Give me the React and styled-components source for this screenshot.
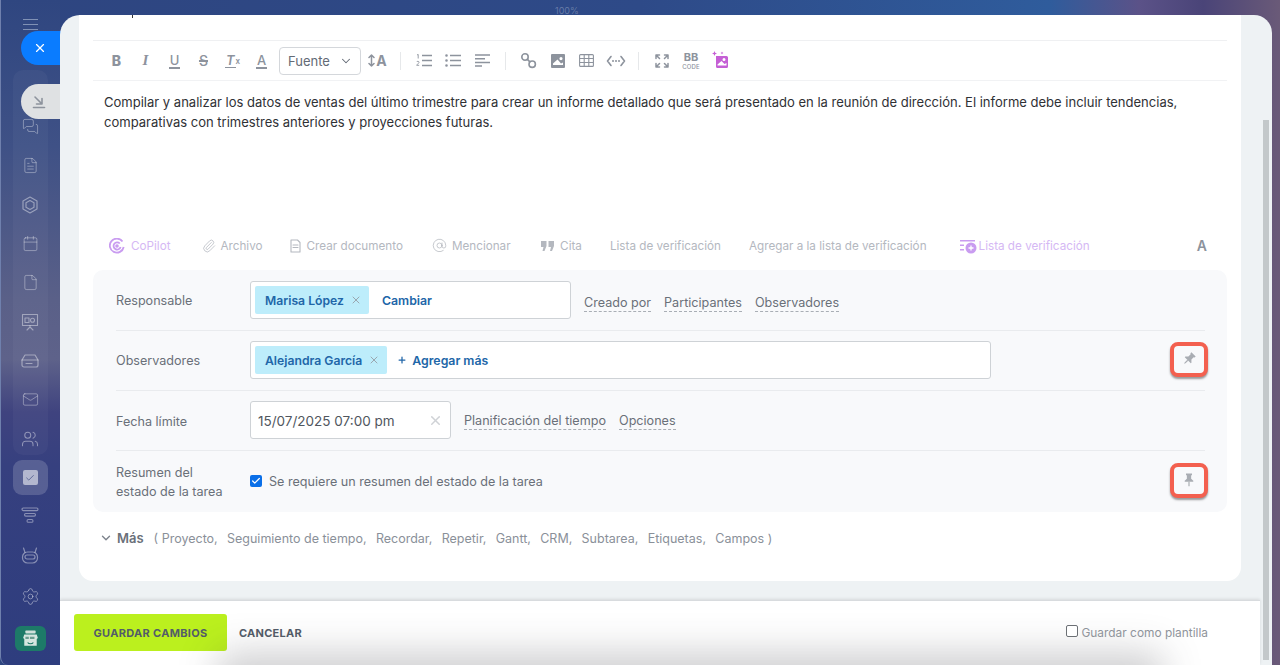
import React from 'react';
import styled, { createGlobalStyle } from 'styled-components';
import { X, MessagesSquare, FileText, Calendar, File, Mail, Users, Settings, ChevronDown, Plus, Paperclip, AtSign, Check } from 'lucide-react';

const Global = createGlobalStyle`
  html, body { margin: 0; padding: 0; height: 100%; overflow: hidden; }
  body { font-family: Inter, "Liberation Sans", sans-serif; font-size: 13px; color: #333; -webkit-font-smoothing: antialiased; }
  * { box-sizing: border-box; }
`;

const Page = styled.div`
  position: relative; width: 1280px; height: 665px; overflow: hidden; display: flex;
  background: linear-gradient(90deg, #2e4580 0%, #2e4a88 50%, #2f5c9c 82%, #5b5288 89%, #4a4478 94%, #6a5a78 100%);
`;
const Sidebar = styled.aside`
  width: 60px; height: 665px; flex: none; position: relative; border-left: 1px solid #6f80ad;
  border-bottom-left-radius: 8px;
  background: linear-gradient(180deg, #2f4680 0%, #3f5186 22%, #5a6088 45%, #5e628a 54%, #3f437f 62%, #36407f 70%, #2e3d7e 100%);
  display: flex; flex-direction: column; align-items: center;
`;
const Burger = styled.div`
  width: 15px; height: 11px; margin: 19px 0 0 -1px; flex: none;
  border-top: 1px solid #8091b5; border-bottom: 1px solid #8091b5; position: relative;
  &::after { content: ''; position: absolute; left: 0; right: 0; top: 4px; height: 1px; background: #8091b5; }
`;
const MenuGroup = styled.div`
  width: 35px; margin: 40px 0 0 -1px; height: 385px; flex: none; border-radius: 10px; background: rgba(255,255,255,.035);
  display: flex; flex-direction: column; align-items: center; padding-top: 37px;
`;
const NavItem = styled.div`
  width: 35px; height: 39px; flex: none; display: flex; align-items: center; justify-content: center; color: rgba(255,255,255,.42);
`;
const ActiveTile = styled.div`
  width: 35px; height: 35px; flex: none; margin: 5px 0 0 -1px; border-radius: 9px; background: rgba(255,255,255,.17);
  display: flex; align-items: center; justify-content: center;
`;
const TaskSquare = styled.div`
  width: 15px; height: 15px; background: rgba(255,255,255,.55); border-radius: 2px; display: flex; align-items: center; justify-content: center; color: #4f5c8d;
`;
const LowerNav = styled(NavItem)`
  margin-left: -1px; height: ${p => p.$h}px;
`;
const GreenTile = styled.div`
  width: 31px; height: 25px; flex: none; margin: 6px 0 0 -1px; border-radius: 6px; background: #1d7a68; display: flex; align-items: center; justify-content: center;
`;
const RoundPill = styled.div`
  position: absolute; left: 21px; width: 42px; border-radius: 18px 0 0 18px; display: flex; align-items: center; padding-left: 11px;
  top: ${p => p.$top}px; height: ${p => p.$h}px; background: ${p => p.$bg}; color: ${p => p.$fg};
`;
const Percent = styled.div`
  position: absolute; top: 5px; left: 555px; font-size: 9px; color: rgba(255,255,255,.28);
`;
const Modal = styled.main`
  position: relative; z-index: 2; width: 1212px; height: 650px; margin-top: 15px; flex: none; background: #eef2f4; border-radius: 20px 18px 0 0; overflow: hidden;
  display: flex; flex-direction: column;
`;
const Thumb = styled.div`
  position: absolute; right: 3px; top: 105px; width: 6px; height: 540px; background: #c3c8ca;
`;
const Card = styled.section`
  width: 1162px; height: 566px; margin-left: 19px; flex: none; background: #fff; border-radius: 0 0 14px 14px; padding: 0 14px;
  display: flex; flex-direction: column;
`;
const TitleClip = styled.div`
  height: 26px; flex: none; border-bottom: 1px solid #eff0f2; padding-left: 39px;
`;
const Descender = styled.div`
  width: 1px; height: 3px; background: #333;
`;
const Toolbar = styled.div`
  height: 40px; flex: none; border-bottom: 1px solid #f1f2f4; display: flex; align-items: center; padding-left: 9px; color: #8d939d;
`;
const ToolBtn = styled.span`
  width: 29px; height: 24px; flex: none; display: flex; align-items: center; justify-content: center; color: #8d939d;
`;
const GlyphB = styled.span`
  font: 800 14px Inter, sans-serif; color: #8d939d;
`;
const GlyphI = styled.span`
  font: italic 700 15px "Liberation Serif", serif; color: #8d939d;
`;
const GlyphU = styled.span`
  font: 500 13px Inter, sans-serif; line-height: 14px; color: #8d939d; border-bottom: 2px solid #8d939d; padding: 0 1px;
`;
const GlyphS = styled.span`
  font: 500 14px Inter, sans-serif; color: #8d939d; text-decoration: line-through; text-decoration-thickness: 1.5px;
`;
const GlyphT = styled.span`
  font: italic 600 13px Inter, sans-serif; line-height: 14px; color: #8d939d; border-bottom: 1.5px solid #8d939d; padding: 0 1px;
`;
const GlyphX = styled.small`
  font: 600 8px Inter, sans-serif; color: #8d939d;
`;
const GlyphA = styled.span`
  font: 700 14px Inter, sans-serif; color: #8d939d; margin-left: 1px;
`;
const SelectBox = styled.div`
  width: 82px; height: 28px; margin: 0 2px 0 3px; flex: none; border: 1px solid #d4d7db; border-radius: 4px; display: flex; align-items: center; justify-content: space-between; padding: 0 7px 0 8px;
  font-size: 13px; color: #636a75; background: #fff;
`;
const Sep = styled.span`
  width: 1px; height: 18px; flex: none; margin: 0 8.5px 0 8px; background: #e6e8ea;
`;
const BBIcon = styled.span`
  display: flex; flex-direction: column; align-items: center; line-height: 1; color: #8d939d; font-weight: 700; font-size: 11px;
`;
const BBSmall = styled.span`
  font-size: 6px; font-weight: 500; margin-top: 1px; letter-spacing: .2px;
`;
const Body = styled.div`
  height: 139px; flex: none; padding: 11px 11px 0; line-height: 20px; font-size: 13.03px; color: #2f3135;
`;
const ActionBar = styled.div`
  height: 50px; flex: none; display: flex; align-items: center; padding: 1px 0 0 16px; font-size: 11.7px;
`;
const Action = styled.span`
  display: flex; align-items: center; flex: none; color: ${p => p.$violet ? '#d5b8f4' : '#b4b8bf'}; margin-right: ${p => p.$mr}px; gap: ${p => p.$gap ?? 5}px;
`;
const FontA = styled.span`
  margin-left: auto; margin-right: 20px; font-weight: 600; font-size: 14px; color: #8d939d;
`;
const Panel = styled.div`
  height: 242px; flex: none; background: #f8f9fb; border-radius: 10px; padding: 0 22px 0 23px;
`;
const Row = styled.div`
  height: ${p => p.$h || 60}px; display: flex; align-items: center; border-bottom: ${p => p.$last ? 'none' : '1px solid #e9ebee'};
`;
const Label = styled.div`
  width: 134px; flex: none; color: #6a7079; font-size: 12.6px; line-height: 19px; padding-top: ${p => p.$pt || 0}px;
`;
const Field = styled.div`
  width: ${p => p.$w}px; height: 38px; flex: none; background: #fff; border: 1px solid #ced2d6; border-radius: 3px; display: flex; align-items: center; padding: 0 4px; margin-bottom: ${p => p.$mb || 0}px;
`;
const Chip = styled.div`
  height: 28px; background: #bdedfb; border-radius: 2px; display: flex; align-items: center; padding: 0 7px 0 10px; gap: 6px; color: #2166a8; font-weight: 600; font-size: 12.2px; white-space: nowrap;
`;
const ChipX = styled.span`
  color: #9aa7b0; display: flex;
`;
const AddLink = styled.span`
  display: flex; align-items: center; gap: 5px; color: #2166a8; font-weight: 600; font-size: 12.3px; margin-left: ${p => p.$ml}px;
`;
const DashLink = styled.span`
  color: #6a7079; font-size: 12.6px; line-height: 16px; border-bottom: 1px dashed #a9aeb5; margin-left: ${p => p.$ml}px; position: relative; top: ${p => p.$top || 0}px; white-space: nowrap;
`;
const DateField = styled(Field)`
  justify-content: space-between; padding: 1px 7px 0 7px; font-size: 13.5px; color: #50565e;
`;
const CheckText = styled.span`
  color: #6a7079; font-size: 12.6px; margin-left: 7px;
`;
const CheckBlue = styled.span`
  width: 12px; height: 12px; flex: none; background: #0a6fe8; border-radius: 2px; color: #fff; display: flex; align-items: center; justify-content: center; margin-bottom: 1px;
`;
const PinBox = styled.div`
  width: 38px; height: 35px; flex: none; margin: 0 -3px ${p => p.$mb || 0}px auto; border: 4px solid #f3604f; border-radius: 8px; box-shadow: 0 2px 2px rgba(60,60,60,.5);
  display: flex; align-items: center; justify-content: center; color: #a9adb3; background: #f8f9fb;
`;
const More = styled.div`
  height: 52px; flex: none; display: flex; align-items: center; padding-left: 6px; color: #8a9099; font-size: 12.5px; white-space: nowrap;
`;
const MoreTitle = styled.span`
  font-weight: 600; color: #6a7079; margin: 0 10px 0 4px; font-size: 13px;
`;
const MoreItem = styled.span`
  margin-right: ${p => p.$mr ?? 9.3}px;
`;
const Footer = styled.footer`
  position: relative; width: 1200px; height: 65px; flex: none; margin-top: 19px; background: #fff; border-top: 1px solid #d8dbde; box-shadow: 0 -1px 3px rgba(0,0,0,.1);
  display: flex; align-items: center; padding: 0 52px 1px 14px; overflow: hidden;
  &::after { content: ''; position: absolute; left: 170px; right: 110px; bottom: -34px; height: 34px; box-shadow: 0 0 38px 12px rgba(60,60,70,.26); }
`;
const SaveBtn = styled.button`
  width: 153px; height: 37px; border: 0; border-radius: 3px; background: #bbf01e; color: #535c69; font: 700 11px Inter, sans-serif; letter-spacing: .3px; text-transform: uppercase;
`;
const CancelBtn = styled.span`
  margin-left: 12px; color: #535c69; font-weight: 700; font-size: 11px; letter-spacing: .25px; text-transform: uppercase;
`;
const Template = styled.label`
  margin-left: auto; display: flex; align-items: center; gap: 3px; color: #8f949b; font-size: 11.9px; position: relative; z-index: 1;
`;
const EmptyCheck = styled.span`
  width: 12px; height: 12px; border: 1px solid #6c7075; border-radius: 2px; background: #fff; margin-top: -3px;
`;

const sw = { fill: 'none', stroke: 'currentColor', strokeLinecap: 'round', strokeLinejoin: 'round' };
const Hexa = () => <svg width="18" height="18" viewBox="0 0 18 18" {...sw} strokeWidth="1.2"><path d="M9 1l7 4v8l-7 4-7-4V5z"/><path d="M9 4.5l4 2.2v4.6l-4 2.2-4-2.2V6.7z"/></svg>;
const Board = () => <svg width="18" height="18" viewBox="0 0 18 18" {...sw} strokeWidth="1.1"><rect x="1.5" y="1.5" width="15" height="11"/><rect x="4" y="5" width="4" height="4.5"/><circle cx="11.5" cy="7.2" r="2"/><path d="M9 12.5v1.5M6 17l3-3 3 3"/></svg>;
const CardI = () => <svg width="18" height="14" viewBox="0 0 18 14" {...sw} strokeWidth="1.2"><path d="M4 1h10l3 5v5a2 2 0 0 1-2 2H3a2 2 0 0 1-2-2V6z"/><path d="M1 6h16M5 9.5h6"/></svg>;
const FunnelI = () => <svg width="18" height="17" viewBox="0 0 18 17" {...sw} strokeWidth="1.1"><rect x="1" y="1" width="16" height="2.6" rx="1.3"/><rect x="3.5" y="6.5" width="11" height="2.6" rx="1.3"/><rect x="6" y="12.5" width="6" height="2.8" rx="1.4"/></svg>;
const RobotI = () => <svg width="18" height="18" viewBox="0 0 18 18" {...sw} strokeWidth="1.2"><rect x="1.5" y="6" width="15" height="11" rx="5"/><path d="M4 6.5L2.5 2M14 6.5L15.5 2"/><rect x="4" y="9" width="10" height="4" rx="2"/></svg>;
const ShopI = () => <svg width="17" height="17" viewBox="0 0 15 15"><rect x="3" y="0.5" width="9" height="2.5" rx=".5" fill="#cfe0da"/><path d="M2 4h11l1 3-1 1v6H2V8L1 7z" fill="#d6e6e0"/><path d="M3 6h3v2H3zM7 6h4v2H7z" fill="#6b9d90"/><path d="M5 11c1 1.5 4 1.5 5 0" stroke="#1d7a68" fill="none"/></svg>;
const DownArrow = () => <svg width="14" height="14" viewBox="0 0 14 14" {...sw} strokeWidth="1.6"><path d="M3 2l7 7M10 3.5V9H4.5"/><path d="M1.5 12.5h11"/></svg>;
const Link2 = () => <svg width="17" height="17" viewBox="0 0 17 17" {...sw} strokeWidth="1.6"><circle cx="5" cy="5" r="3.2"/><circle cx="12.2" cy="12.2" r="3.2"/><path d="M7.4 7.4l2.5 2.5"/></svg>;
const ImageI = () => <svg width="14" height="14" viewBox="0 0 14 14"><path fill="currentColor" fillRule="evenodd" d="M1 0h12a1 1 0 0 1 1 1v12a1 1 0 0 1-1 1H1a1 1 0 0 1-1-1V1a1 1 0 0 1 1-1zm9 3a1.6 1.6 0 1 0 0 3.2A1.6 1.6 0 0 0 10 3zM2 11h10V8.5l-2 1-3.5-4L2 9.5z"/></svg>;
const TableI = () => <svg width="15" height="13" viewBox="0 0 15 13" fill="none" stroke="currentColor" strokeWidth="1.1"><rect x=".6" y=".6" width="13.8" height="11.8" rx="1"/><path d="M.6 4.5h13.8M.6 8.5h13.8M5.2.6v11.8M9.8.6v11.8"/></svg>;
const Code = () => <svg width="20" height="12" viewBox="0 0 20 12" {...sw} strokeWidth="1.6"><path d="M5 1.5L1.5 6 5 10.5M15 1.5L18.5 6 15 10.5"/><path d="M7 6h.01M10 6h.01M13 6h.01" strokeWidth="2"/></svg>;
const Full = () => <svg width="14" height="14" viewBox="0 0 14 14" {...sw} strokeWidth="1.5"><path d="M1 4.5V1h3.5M1 1l3.5 3.5M13 4.5V1H9.5M13 1L9.5 4.5M1 9.5V13h3.5M1 13l3.5-3.5M13 9.5V13H9.5M13 13L9.5 9.5"/></svg>;
const Magic = () => <svg width="17" height="17" viewBox="0 0 17 17" style={{ marginTop: -2 }}><path fill="#c55fd5" fillRule="evenodd" d="M4 5h10.5A1.5 1.5 0 0 1 16 6.5v9a1.5 1.5 0 0 1-1.5 1.5h-9A1.5 1.5 0 0 1 4 15.5zm8 2a1.5 1.5 0 1 0 0 3 1.5 1.5 0 0 0 0-3zM5.5 14.5h9V12l-2 1-3-3-4 3.5z"/><path fill="#c55fd5" d="M2.5 0l.7 1.8L5 2.5l-1.8.7L2.5 5l-.7-1.8L0 2.5l1.8-.7zM10 .5l.4 1.1 1.1.4-1.1.4-.4 1.1-.4-1.1L8.5 2l1.1-.4z"/></svg>;
const SizeA = () => <svg width="7" height="13" viewBox="0 0 7 13" {...sw} strokeWidth="1.5"><path d="M3.5 1v11M1 3.5L3.5 1 6 3.5M1 9.5L3.5 12 6 9.5"/></svg>;
const OlI = () => <svg width="16" height="13" viewBox="0 0 16 13" fill="none" stroke="currentColor"><path d="M6 1.5h10M6 6.5h10M6 11.5h10" strokeWidth="1.6"/><path d="M1 1l1.2-.6V4.5M.7 8c.3-1 2.4-1 2.3.3 0 .9-1.5 1.5-2.3 3h2.5" strokeWidth=".9"/></svg>;
const UlI = () => <svg width="16" height="13" viewBox="0 0 16 13" fill="none" stroke="currentColor"><path d="M5 1.5h11M5 6.5h11M5 11.5h11" strokeWidth="1.6"/><path d="M1.5 1.5h.01M1.5 6.5h.01M1.5 11.5h.01" strokeWidth="2.6" strokeLinecap="round"/></svg>;
const AlignI = () => <svg width="15" height="13" viewBox="0 0 15 13" fill="none" stroke="currentColor" strokeWidth="1.5"><path d="M0 1h15M0 4.7h10M0 8.4h15M0 12h7"/></svg>;
const CoPilotI = () => <svg width="16" height="16" viewBox="0 0 16 16" fill="none" stroke="#c99cf0" strokeWidth="1.8"><path d="M13.5 3.5A7 7 0 1 0 14.7 9"/><path d="M10.8 5.5A3.6 3.6 0 1 0 11.6 9"/><circle cx="8" cy="8" r="1.8" fill="#c99cf0" stroke="none"/></svg>;
const DocI = () => <svg width="11" height="14" viewBox="0 0 11 14" {...sw} strokeWidth="1.1"><path d="M1 1h6.5L10 3.5V13H1z"/><path d="M3 6h5M3 8.5h5"/></svg>;
const QuoteI = () => <svg width="13" height="10" viewBox="0 0 13 10" fill="currentColor"><path d="M0 0h5.5v5L3.5 10H1.5l1-4H0zM7.5 0H13v5l-2 5H9l1-4H7.5z"/></svg>;
const CheckPlus = () => <svg width="18" height="16" viewBox="0 0 18 16"><path d="M1 2h15v1.6H1zM1 6.5h4v1.6H1zM1 11h4v1.6H1z" fill="#c99cf0"/><circle cx="12" cy="10" r="5.5" fill="#c99cf0"/><path d="M12 7.5v5M9.5 10h5" stroke="#fff" strokeWidth="1.3"/></svg>;
const PushPin = ({ tilt }) => <svg width="12" height="14" viewBox="0 0 14 16" fill="currentColor" style={{ transform: tilt ? 'rotate(45deg)' : 'none' }}><path d="M3.5 0.5h7v1.6L9.5 2.8V6.5l2.5 2.5v1H2V9l2.5-2.5V2.8L3.5 2.1z"/><path d="M6.3 10h1.4v4.5L7 16l-.7-1.5z"/></svg>;

export default function App() {
  return (
    <Page>
      <Global />
      <Sidebar>
        <Burger />
        <MenuGroup>
          <NavItem><MessagesSquare size={17} strokeWidth={1.2} /></NavItem>
          <NavItem><FileText size={17} strokeWidth={1.2} /></NavItem>
          <NavItem><Hexa /></NavItem>
          <NavItem><Calendar size={17} strokeWidth={1.2} /></NavItem>
          <NavItem><File size={17} strokeWidth={1.2} /></NavItem>
          <NavItem><Board /></NavItem>
          <NavItem><CardI /></NavItem>
          <NavItem><Mail size={17} strokeWidth={1.2} /></NavItem>
          <NavItem><Users size={18} strokeWidth={1.4} /></NavItem>
        </MenuGroup>
        <ActiveTile><TaskSquare><Check size={10} strokeWidth={2} /></TaskSquare></ActiveTile>
        <LowerNav $h={41}><FunnelI /></LowerNav>
        <LowerNav $h={37}><RobotI /></LowerNav>
        <LowerNav $h={47}><Settings size={19} strokeWidth={1.2} /></LowerNav>
        <GreenTile><ShopI /></GreenTile>
      </Sidebar>
      <RoundPill $top={31} $h={34} $bg="#0a7cff" $fg="#fff"><X size={14} strokeWidth={2} style={{ marginLeft: 1 }} /></RoundPill>
      <RoundPill $top={84} $h={35} $bg="#dfe1e3" $fg="#8d939d"><DownArrow /></RoundPill>
      <Percent>100%</Percent>
      <Modal>
        <Thumb />
        <Card>
          <TitleClip><Descender /></TitleClip>
          <Toolbar>
            <ToolBtn><GlyphB>B</GlyphB></ToolBtn>
            <ToolBtn><GlyphI>I</GlyphI></ToolBtn>
            <ToolBtn><GlyphU>U</GlyphU></ToolBtn>
            <ToolBtn><GlyphS>S</GlyphS></ToolBtn>
            <ToolBtn><GlyphT>T</GlyphT><GlyphX>x</GlyphX></ToolBtn>
            <ToolBtn><GlyphU>A</GlyphU></ToolBtn>
            <SelectBox>Fuente<ChevronDown size={14} strokeWidth={1.8} /></SelectBox>
            <ToolBtn><SizeA /><GlyphA>A</GlyphA></ToolBtn>
            <Sep />
            <ToolBtn><OlI /></ToolBtn>
            <ToolBtn><UlI /></ToolBtn>
            <ToolBtn><AlignI /></ToolBtn>
            <Sep />
            <ToolBtn><Link2 /></ToolBtn>
            <ToolBtn><ImageI /></ToolBtn>
            <ToolBtn><TableI /></ToolBtn>
            <ToolBtn><Code /></ToolBtn>
            <Sep />
            <ToolBtn><Full /></ToolBtn>
            <ToolBtn><BBIcon>BB<BBSmall>CODE</BBSmall></BBIcon></ToolBtn>
            <ToolBtn><Magic /></ToolBtn>
          </Toolbar>
          <Body>Compilar y analizar los datos de ventas del último trimestre para crear un informe detallado que será presentado en la reunión de dirección. El informe debe incluir tendencias, comparativas con trimestres anteriores y proyecciones futuras.</Body>
          <ActionBar>
            <Action $violet $mr={31} $gap={6}><CoPilotI />CoPilot</Action>
            <Action $mr={27}><Paperclip size={14} strokeWidth={1.3} />Archivo</Action>
            <Action $mr={29} $gap={6}><DocI />Crear documento</Action>
            <Action $mr={30.5}><AtSign size={15} strokeWidth={1.2} />Mencionar</Action>
            <Action $mr={28} $gap={6}><QuoteI />Cita</Action>
            <Action $mr={28}>Lista de verificación</Action>
            <Action $mr={32}>Agregar a la lista de verificación</Action>
            <Action $violet $mr={0} $gap={2}><CheckPlus />Lista de verificación</Action>
            <FontA>A</FontA>
          </ActionBar>
          <Panel>
            <Row $h={61}>
              <Label>Responsable</Label>
              <Field $w={321}>
                <Chip>Marisa López<ChipX><X size={12} strokeWidth={2} /></ChipX></Chip>
                <AddLink $ml={13}>Cambiar</AddLink>
              </Field>
              <DashLink $ml={13} $top={3}>Creado por</DashLink>
              <DashLink $ml={13} $top={3}>Participantes</DashLink>
              <DashLink $ml={13} $top={3}>Observadores</DashLink>
            </Row>
            <Row>
              <Label>Observadores</Label>
              <Field $w={741} $mb={1}>
                <Chip>Alejandra García<ChipX><X size={12} strokeWidth={2} /></ChipX></Chip>
                <AddLink $ml={10}><Plus size={10} strokeWidth={3} />Agregar más</AddLink>
              </Field>
              <PinBox $mb={3}><PushPin tilt /></PinBox>
            </Row>
            <Row>
              <Label $pt={1}>Fecha límite</Label>
              <DateField $w={201} $mb={1}>15/07/2025 07:00 pm<ChipX><X size={15} strokeWidth={2.4} color="#cfd2d6" /></ChipX></DateField>
              <DashLink $ml={13} $top={1}>Planificación del tiempo</DashLink>
              <DashLink $ml={13} $top={1}>Opciones</DashLink>
            </Row>
            <Row $h={61} $last>
              <Label>Resumen del<br />estado de la tarea</Label>
              <CheckBlue><Check size={10} strokeWidth={3} /></CheckBlue>
              <CheckText>Se requiere un resumen del estado de la tarea</CheckText>
              <PinBox $mb={3}><PushPin /></PinBox>
            </Row>
          </Panel>
          <More>
            <ChevronDown size={14} strokeWidth={2.4} color="#7d838c" />
            <MoreTitle>Más</MoreTitle>
            <MoreItem>( Proyecto,</MoreItem>
            <MoreItem>Seguimiento de tiempo,</MoreItem>
            <MoreItem>Recordar,</MoreItem>
            <MoreItem>Repetir,</MoreItem>
            <MoreItem>Gantt,</MoreItem>
            <MoreItem>CRM,</MoreItem>
            <MoreItem>Subtarea,</MoreItem>
            <MoreItem>Etiquetas,</MoreItem>
            <MoreItem $mr={0}>Campos )</MoreItem>
          </More>
        </Card>
        <Footer>
          <SaveBtn>Guardar cambios</SaveBtn>
          <CancelBtn>Cancelar</CancelBtn>
          <Template><EmptyCheck />Guardar como plantilla</Template>
        </Footer>
      </Modal>
    </Page>
  );
}
